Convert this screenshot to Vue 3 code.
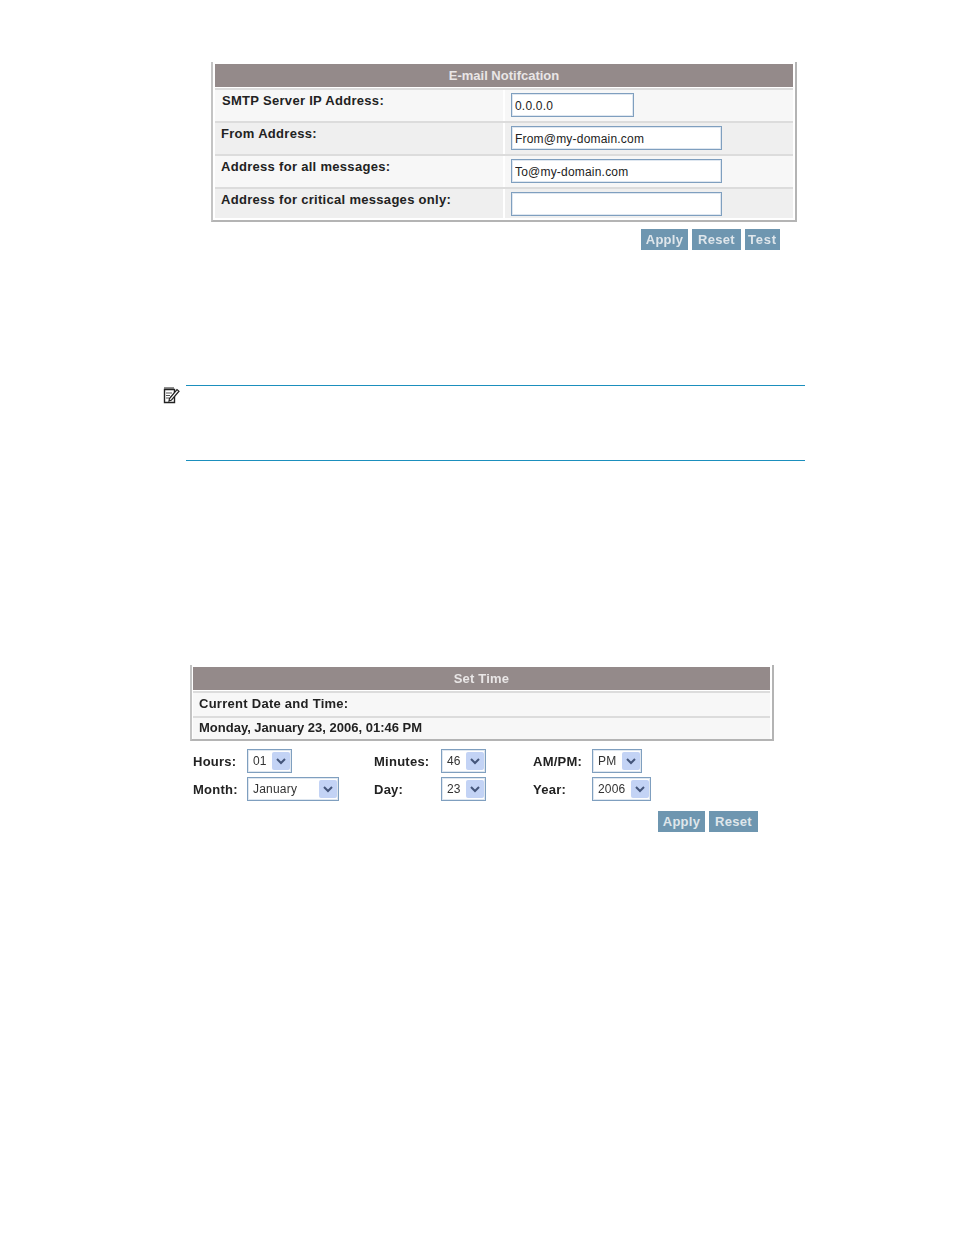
<template>
  <div class="page">
    <section class="mail">
      <div class="panel">
        <div class="head">E-mail Notifcation</div>
        <div v-for="(row, i) in mailRows" :key="row.label" class="mail-row" :class="{ alt: i % 2 == 1 }">
          <div class="mail-label" :class="{ first: i == 0 }">{{ row.label }}</div>
          <div class="mail-field">
            <input class="text-input" :class="{ short: i == 0 }" type="text" :value="row.value" readonly>
          </div>
        </div>
      </div>
      <div class="buttons mail-buttons">
        <button class="btn apply">Apply</button>
        <button class="btn reset">Reset</button>
        <button class="btn test">Test</button>
      </div>
    </section>

    <section class="note">
      <svg class="note-icon" width="18" height="18" viewBox="0 0 18 18" fill="none">
        <path d="M2.5 3.5H12.5V16.5H2.5Z" stroke="#222" stroke-width="1.4" />
        <path d="M3 3V1M5 3V1M7 3V1M9 3V1M11 3V1" stroke="#333" stroke-width="1.1" />
        <path d="M4 7H10M4 9.5H8M4 12H7" stroke="#555" stroke-width="1" />
        <path d="M7.5 12.5L15 3.5L17 5.2L9.5 14L7 15Z" fill="#fff" stroke="#222" stroke-width="1.2" />
      </svg>
      <div class="note-body"></div>
    </section>

    <section class="time">
      <div class="panel time-panel">
        <div class="head">Set Time</div>
        <div class="time-row spaced">Current Date and Time:</div>
        <div class="time-row last">Monday, January 23, 2006, 01:46 PM</div>
      </div>
      <div class="time-form">
        <template v-for="f in timeFields" :key="f.label">
          <label class="time-label">{{ f.label }}</label>
          <div class="fake-select" :style="{ width: f.width + 'px' }">
            <span>{{ f.value }}</span>
            <span class="arrow">
              <svg width="10" height="7" viewBox="0 0 10 7" fill="none">
                <path d="M1 1L5 5L9 1" stroke="#44557a" stroke-width="2" />
              </svg>
            </span>
          </div>
        </template>
      </div>
      <div class="buttons time-buttons">
        <button class="btn apply">Apply</button>
        <button class="btn reset">Reset</button>
      </div>
    </section>
  </div>
</template>

<script setup>
const mailRows = [
  { label: 'SMTP Server IP Address:', value: '0.0.0.0' },
  { label: 'From Address:', value: 'From@my-domain.com' },
  { label: 'Address for all messages:', value: 'To@my-domain.com' },
  { label: 'Address for critical messages only:', value: '' }
]

const timeFields = [
  { label: 'Hours:', value: '01', width: 45 },
  { label: 'Minutes:', value: '46', width: 45 },
  { label: 'AM/PM:', value: 'PM', width: 50 },
  { label: 'Month:', value: 'January', width: 92 },
  { label: 'Day:', value: '23', width: 45 },
  { label: 'Year:', value: '2006', width: 59 }
]
</script>

<style>
html, body {
  background: #fff;
}
</style>

<style scoped>
.page {
  height: 1235px;
  box-sizing: border-box;
  padding-top: 62px;
  font-family: "Liberation Sans", Arial, sans-serif;
  color: #222;
  overflow: hidden;
  filter: blur(0.35px);
}

.panel {
  box-sizing: border-box;
  border: 2px solid #b4b4b4;
  border-top: 0;
  border-left-color: #c4c4c4;
  padding: 2px;
  background: #fff;
}

.head {
  height: 23px;
  line-height: 24px;
  background: #948a8a;
  color: #e9e6e6;
  font-size: 13px;
  font-weight: bold;
  text-align: center;
}

.mail {
  margin-left: 211px;
  width: 586px;
}

.mail-row {
  display: flex;
  height: 33px;
  box-sizing: border-box;
  border-top: 2px solid #dcdcdc;
  background: #f7f7f7;
}

.head + .mail-row {
  margin-top: 1px;
}

.mail-row:last-child {
  height: 31px;
}

.mail-row.alt {
  background: #efefef;
}

.mail-label {
  width: 288px;
  padding: 3px 0 0 6px;
  box-sizing: border-box;
  font-size: 13px;
  line-height: 15px;
  font-weight: bold;
  letter-spacing: 0.3px;
}

.mail-label.first {
  padding-left: 7px;
}

.mail-field {
  flex: 1;
  border-left: 2px solid #fff;
  padding: 3px 0 0 6px;
}

.text-input {
  display: block;
  box-sizing: border-box;
  width: 211px;
  height: 24px;
  padding: 1px 3px 0 3px;
  border: 1px solid #7f9fbf;
  border-radius: 0;
  outline: 0;
  background: #fff;
  box-shadow: inset 0 0 0 1px #dfe7f0;
  color: #222;
  font-family: inherit;
  font-size: 12px;
  letter-spacing: 0.2px;
}

.text-input.short {
  width: 123px;
}

.buttons {
  display: flex;
  justify-content: flex-end;
  gap: 4px;
}

.mail-buttons {
  margin-top: 7px;
  padding-right: 17px;
}

.time-buttons {
  margin-top: 10px;
  padding-right: 16px;
}

.btn {
  height: 21px;
  padding: 0;
  border: 0;
  background: #6e96b0;
  color: #dfe6eb;
  font-family: inherit;
  font-size: 13px;
  font-weight: bold;
  letter-spacing: 0.3px;
  text-align: center;
}

.btn.apply {
  width: 47px;
}

.btn.reset {
  width: 49px;
}

.btn.test {
  width: 35px;
  letter-spacing: 0.8px;
}

.note {
  position: relative;
  margin: 135px 149px 0 186px;
  height: 76px;
  box-sizing: border-box;
  border-top: 1px solid #1b8fbd;
  border-bottom: 1px solid #1b8fbd;
}

.note-icon {
  position: absolute;
  left: -24px;
  top: 0;
}

.time {
  margin: 204px 0 0 190px;
  width: 584px;
}

.time-panel {
  padding-left: 1px;
  padding-bottom: 0;
}

.time-panel .head {
  letter-spacing: 0.2px;
}

.time-row {
  height: 25px;
  box-sizing: border-box;
  border-top: 2px solid #dcdcdc;
  background: #f7f7f7;
  padding-left: 6px;
  font-size: 13px;
  line-height: 22px;
  font-weight: bold;
}

.time-row.spaced {
  letter-spacing: 0.27px;
}

.head + .time-row {
  margin-top: 1px;
}

.time-row.last {
  height: 23px;
  line-height: 20px;
}

.time-form {
  display: grid;
  grid-template-columns: 54px 127px 67px 92px 59px auto;
  row-gap: 4px;
  margin-top: 8px;
  padding-left: 3px;
  align-items: center;
}

.time-label {
  font-size: 13px;
  font-weight: bold;
  letter-spacing: 0.25px;
}

.fake-select {
  display: flex;
  align-items: center;
  justify-content: space-between;
  box-sizing: border-box;
  height: 24px;
  padding: 2px 1px 2px 5px;
  border: 1px solid #7f9fbf;
  box-shadow: inset 0 0 0 1px #dfe7f0;
  background: #fff;
  font-size: 12px;
  letter-spacing: 0.2px;
  color: #333;
}

.arrow {
  display: flex;
  align-items: center;
  justify-content: center;
  width: 18px;
  height: 18px;
  border-radius: 2px;
  background: #c3d3f5;
}
</style>
